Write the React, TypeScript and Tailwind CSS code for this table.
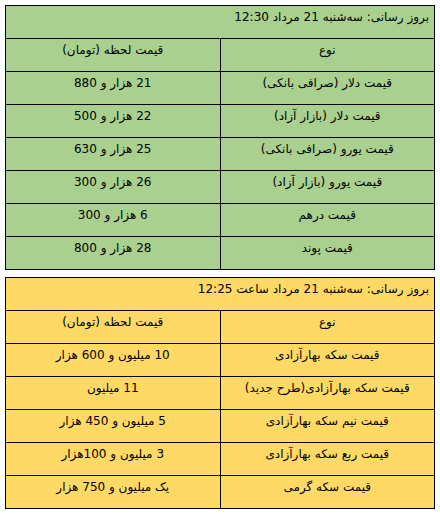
const currency = [
  ["قیمت دلار (صرافی بانکی)", "21 هزار و 880"],
  ["قیمت دلار (بازار آزاد)", "22 هزار و 500"],
  ["قیمت یورو (صرافی بانکی)", "25 هزار و 630"],
  ["قیمت یورو (بازار آزاد)", "26 هزار و 300"],
  ["قیمت درهم", "6 هزار و 300"],
  ["قیمت پوند", "28 هزار و 800"],
];

const coins = [
  ["قیمت سکه بهارآزادی", "10 میلیون و 600 هزار"],
  ["قیمت سکه بهارآزادی(طرح جدید)", "11 میلیون"],
  ["قیمت نیم سکه بهارآزادی", "5 میلیون و 450 هزار"],
  ["قیمت ربع سکه بهارآزادی", "3 میلیون و 100هزار"],
  ["قیمت سکه گرمی", "یک میلیون و 750 هزار"],
];

function PriceTable({ title, rows, bg }: { title: string; rows: string[][]; bg: string }) {
  const cell = "h-[33px] border border-black align-top pt-[4px] text-center";
  return (
    <table dir="rtl" className={`w-[430px] border-collapse table-fixed ${bg}`}>
      <tbody>
        <tr>
          <td colSpan={2} className="h-[33px] border border-black align-top pt-[4px] pr-[5px] text-right">
            {title}
          </td>
        </tr>
        <tr>
          <td className={`${cell} w-[213px]`}>نوع</td>
          <td className={cell}>قیمت لحظه (تومان)</td>
        </tr>
        {rows.map(([name, price]) => (
          <tr key={name}>
            <td className={cell}>{name}</td>
            <td className={cell}>{price}</td>
          </tr>
        ))}
      </tbody>
    </table>
  );
}

export default function App() {
  return (
    <div
      className="w-[440px] h-[514px] bg-white pt-[5px] pl-[5px] text-[12px] leading-[15px] text-black"
      style={{ fontFamily: '"DejaVu Sans", sans-serif' }}
    >
      <div className="flex flex-col gap-[7px]">
        <PriceTable title="بروز رسانی: سه‌شنبه 21 مرداد 12:30" rows={currency} bg="bg-[#a9d08e]" />
        <PriceTable title="بروز رسانی: سه‌شنبه 21 مرداد ساعت 12:25" rows={coins} bg="bg-[#ffd966]" />
      </div>
    </div>
  );
}
